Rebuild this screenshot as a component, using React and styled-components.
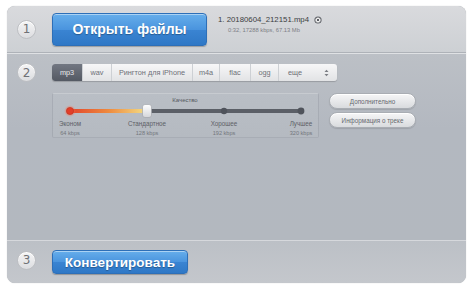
import React from "react";
import styled, { createGlobalStyle } from "styled-components";

const Global = createGlobalStyle`
  html, body { margin: 0; padding: 0; background: #ffffff; }
  body { font-family: "Liberation Sans", Arial, sans-serif; }
`;

const Page = styled.div`
  width: 474px;
  height: 288px;
  padding: 6px 0 0 7px;
  box-sizing: border-box;
`;

const Panel = styled.div`
  width: 459px;
  height: 277px;
  border-radius: 8px;
  overflow: hidden;
  display: flex;
  flex-direction: column;
  background: #b6bbc2;
  box-shadow: 0 0 1px rgba(0, 0, 0, 0.25);
`;

const Section = styled.div`
  display: flex;
  align-items: ${(p) => p.$align || "center"};
  flex: ${(p) => (p.$grow ? "1 1 auto" : "0 0 auto")};
  height: ${(p) => (p.$h ? `${p.$h}px` : "auto")};
  padding: ${(p) => p.$pad || "0"};
  box-sizing: border-box;
  background: ${(p) => p.$bg};
  border-top: ${(p) => (p.$topLine ? `1px solid ${p.$topLine}` : "none")};
  border-bottom: ${(p) => (p.$bottomLine ? `1px solid ${p.$bottomLine}` : "none")};
`;

const StepCircle = styled.div`
  flex: 0 0 auto;
  width: 19px;
  height: 19px;
  margin: ${(p) => p.$m || "0 16px 0 10px"};
  border-radius: 50%;
  box-sizing: border-box;
  border: 1px solid #bdbfc3;
  background: linear-gradient(#f5f5f6, #dcdde0);
  box-shadow: inset 0 1px 0 #ffffff;
  color: #6f7176;
  font-size: 12px;
  display: flex;
  align-items: center;
  justify-content: center;
  font-family: "DejaVu Sans", sans-serif;
`;

const BlueButton = styled.button`
  width: ${(p) => p.$w}px;
  height: ${(p) => p.$h}px;
  border: 1px solid #2d6fb8;
  border-radius: 4px;
  background: linear-gradient(#66aeeb 0%, #4a94de 50%, #3a84d2 51%, #2f78c6 100%);
  box-shadow: inset 0 1px 0 rgba(255, 255, 255, 0.45), 0 1px 1px rgba(0, 0, 0, 0.25);
  color: #ffffff;
  font-family: "Liberation Sans", Arial, sans-serif;
  font-weight: bold;
  font-size: ${(p) => p.$fs}px;
  text-shadow: 0 1px 1px rgba(0, 0, 0, 0.3);
  padding: 0;
  cursor: pointer;
`;

const FileInfo = styled.div`
  margin-left: 11px;
  align-self: flex-start;
  padding-top: 9px;
  display: flex;
  flex-direction: column;
  gap: 3px;
`;

const FileName = styled.div`
  display: flex;
  align-items: center;
  gap: 5px;
  font-size: 7.8px;
  color: #3c3e42;
`;

const FileMeta = styled.div`
  font-size: 5.8px;
  color: #7d8086;
  padding-left: 10px;
`;

const Content = styled.div`
  display: flex;
  flex-direction: column;
  gap: 12px;
`;

const TabBar = styled.div`
  display: flex;
  height: 17px;
  width: 285px;
  border-radius: 3px;
  overflow: hidden;
  background: linear-gradient(#f7f7f8, #e2e3e5);
  box-shadow: 0 1px 1px rgba(0, 0, 0, 0.18);
`;

const Tab = styled.div`
  flex: 0 0 ${(p) => p.$w}px;
  display: flex;
  align-items: center;
  justify-content: ${(p) => (p.$left ? "space-between" : "center")};
  padding: ${(p) => (p.$left ? "0 8px 0 9px" : "0")};
  box-sizing: border-box;
  font-size: 7.3px;
  color: ${(p) => (p.$active ? "#e8e9eb" : "#6d7077")};
  background: ${(p) => (p.$active ? "linear-gradient(#727782, #545963)" : "transparent")};
  border-left: ${(p) => (p.$first ? "none" : "1px solid #cdd0d4")};
`;

const SelectArrows = () => (
  <svg width="5" height="8" viewBox="0 0 5 8">
    <path d="M0.5 3 L2.5 0.8 L4.5 3 Z" fill="#7a7d83" />
    <path d="M0.5 5 L2.5 7.2 L4.5 5 Z" fill="#7a7d83" />
  </svg>
);

const QualityRow = styled.div`
  display: flex;
  align-items: flex-start;
  gap: 10px;
`;

const QualityBox = styled.div`
  width: 267px;
  height: 45px;
  box-sizing: border-box;
  padding: 3px 19px 0 17px;
  border: 1px solid rgba(120, 126, 135, 0.25);
  border-top-color: rgba(255, 255, 255, 0.25);
  border-radius: 2px;
  background: linear-gradient(#b9bec5, #b5bac1);
  display: flex;
  flex-direction: column;
`;

const QualityTitle = styled.div`
  text-align: center;
  font-size: 6px;
  color: #55585e;
  padding-left: 1px;
  height: 6px;
  line-height: 6px;
`;

const Track = styled.svg`
  display: block;
  width: 231px;
  height: 14px;
  overflow: visible;
  margin-top: 1px;
`;

const Labels = styled.div`
  display: flex;
  justify-content: space-between;
  width: 231px;
  margin-top: 2px;
`;

const Label = styled.div`
  width: 0;
  display: flex;
  flex-direction: column;
  align-items: center;
  gap: 3px;
  white-space: nowrap;
`;

const LabelName = styled.span`
  font-size: 6.3px;
  color: #5d6066;
`;

const LabelRate = styled.span`
  font-size: 5.6px;
  color: #73767c;
`;

const SideButtons = styled.div`
  display: flex;
  flex-direction: column;
  gap: 3px;
`;

const PillButton = styled.button`
  width: 87px;
  height: 16px;
  border-radius: 8px;
  border: 1px solid #a9adb3;
  background: linear-gradient(#f6f6f7, #d9dbde);
  box-shadow: inset 0 1px 0 #ffffff, 0 1px 1px rgba(0, 0, 0, 0.12);
  font-family: "Liberation Sans", Arial, sans-serif;
  font-size: 6.3px;
  color: #64676d;
  padding: 0;
`;

const RemoveIcon = () => (
  <svg width="8" height="8" viewBox="0 0 8 8">
    <circle cx="4" cy="4" r="3.6" fill="#5b5e64" />
    <circle cx="4" cy="4" r="2.6" fill="#f0f0f0" />
    <path d="M2.8 2.8 L5.2 5.2 M5.2 2.8 L2.8 5.2" stroke="#5b5e64" strokeWidth="1" />
  </svg>
);

const tabs = [
  { t: "mp3", w: 30, active: true },
  { t: "wav", w: 29 },
  { t: "Рингтон для iPhone", w: 81 },
  { t: "m4a", w: 27 },
  { t: "flac", w: 31 },
  { t: "ogg", w: 28 },
];

const levels = [
  { n: "Эконом", r: "64 kbps" },
  { n: "Стандартное", r: "128 kbps" },
  { n: "Хорошее", r: "192 kbps" },
  { n: "Лучшее", r: "320 kbps" },
];

export default function App() {
  return (
    <>
      <Global />
      <Page>
        <Panel>
          <Section
            $h={47}
            $bg="linear-gradient(#d9dadd, #cdd0d4)"
            $bottomLine="#aeb2b8"
          >
            <StepCircle>1</StepCircle>
            <BlueButton $w={155} $h={33} $fs={14}>
              Открыть файлы
            </BlueButton>
            <FileInfo>
              <FileName>
                1. 20180604_212151.mp4
                <RemoveIcon />
              </FileName>
              <FileMeta>0:32, 17288 kbps, 67.13 Mb</FileMeta>
            </FileInfo>
          </Section>

          <Section
            $grow
            $align="flex-start"
            $pad="10px 0 0 0"
            $bg="linear-gradient(#bcc0c6, #b3b8c0 40%, #b3b8bf)"
            $topLine="#dfe1e4"
          >
            <StepCircle $m="-1px 16px 0 10px">2</StepCircle>
            <Content>
              <TabBar>
                {tabs.map((tb, i) => (
                  <Tab key={tb.t} $w={tb.w} $active={tb.active} $first={i === 0}>
                    {tb.t}
                  </Tab>
                ))}
                <Tab $w={59} $left>
                  <span>еще</span>
                  <SelectArrows />
                </Tab>
              </TabBar>
              <QualityRow>
                <QualityBox>
                  <QualityTitle>Качество</QualityTitle>
                  <Track viewBox="0 0 231 14">
                    <defs>
                      <linearGradient id="fill" x1="0" x2="1" y1="0" y2="0">
                        <stop offset="0" stopColor="#e2452c" />
                        <stop offset="0.5" stopColor="#ee8a3e" />
                        <stop offset="1" stopColor="#f3df86" />
                      </linearGradient>
                      <linearGradient id="thumb" x1="0" x2="0" y1="0" y2="1">
                        <stop offset="0" stopColor="#ffffff" />
                        <stop offset="1" stopColor="#d4d6da" />
                      </linearGradient>
                      <radialGradient id="glow">
                        <stop offset="0.5" stopColor="#ff6a4a" stopOpacity="0.6" />
                        <stop offset="1" stopColor="#ff6a4a" stopOpacity="0" />
                      </radialGradient>
                    </defs>
                    <rect x="0" y="5" width="231" height="4" rx="2" fill="#5b5f67" />
                    <rect x="0" y="5" width="77" height="4" fill="url(#fill)" />
                    <circle cx="0" cy="7" r="6" fill="url(#glow)" />
                    <circle cx="0" cy="7" r="3.6" fill="#e23e28" stroke="#b8301f" strokeWidth="0.6" />
                    <circle cx="154" cy="7" r="3.2" fill="#4f535b" />
                    <circle cx="231" cy="7" r="3.4" fill="#4f535b" />
                    <rect x="72.5" y="0.5" width="9" height="13" rx="2.5" fill="url(#thumb)" stroke="#9a9ea5" strokeWidth="0.6" />
                  </Track>
                  <Labels>
                    {levels.map((l) => (
                      <Label key={l.n}>
                        <LabelName>{l.n}</LabelName>
                        <LabelRate>{l.r}</LabelRate>
                      </Label>
                    ))}
                  </Labels>
                </QualityBox>
                <SideButtons>
                  <PillButton>Дополнительно</PillButton>
                  <PillButton>Информация о треке</PillButton>
                </SideButtons>
              </QualityRow>
            </Content>
          </Section>

          <Section
            $h={43}
            $bg="linear-gradient(#bcc0c6, #c4c7cc)"
            $topLine="#d6d8dc"
          >
            <StepCircle $m="-4px 16px 0 10px">3</StepCircle>
            <BlueButton $w={136} $h={24} $fs={13.5}>
              Конвертировать
            </BlueButton>
          </Section>
        </Panel>
      </Page>
    </>
  );
}
